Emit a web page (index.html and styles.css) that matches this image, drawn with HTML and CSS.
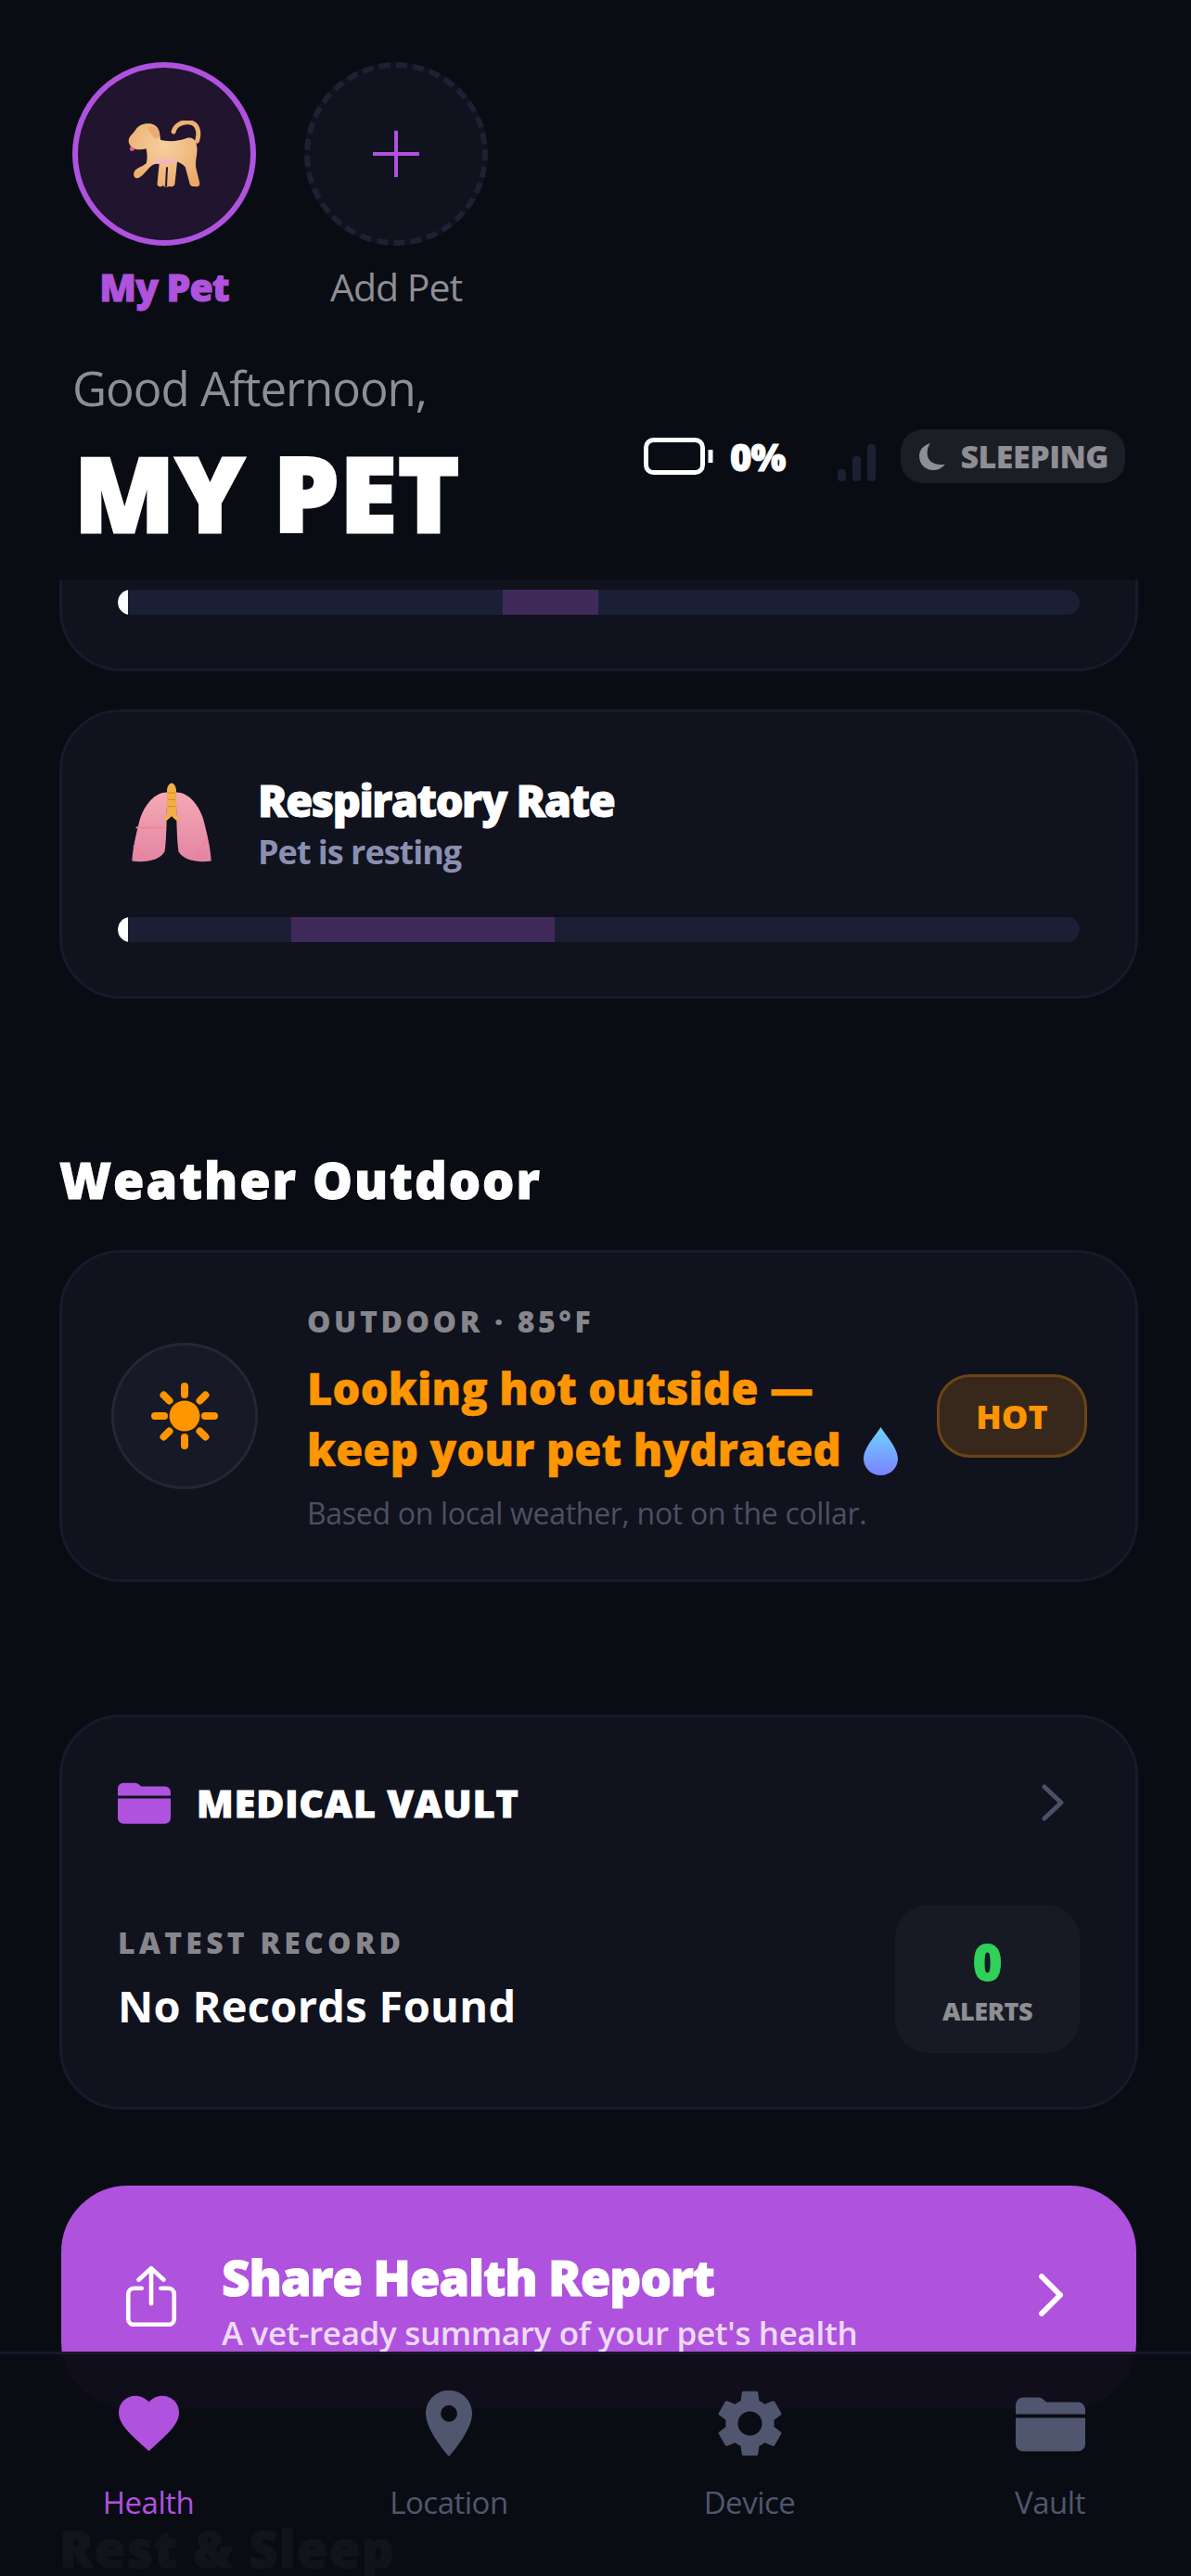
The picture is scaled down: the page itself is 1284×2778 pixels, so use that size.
FILE: index.html
```html
<!DOCTYPE html>
<html lang="en">
<head>
  <meta charset="UTF-8">
  <meta name="viewport" content="width=device-width, initial-scale=1.0">
  <title>My Pet - Health</title>
  <link rel="stylesheet" href="styles.css">
</head>
<body>
  <div class="screen">
    <header class="top">
      <div class="pets">
        <div class="pet active">
          <div class="pet-circle">
            <svg class="dog" viewBox="0 0 235 215">
              <defs>
                <radialGradient id="dogFill" cx="50%" cy="35%" r="75%">
                  <stop offset="0" stop-color="#f6cfa0"/>
                  <stop offset="1" stop-color="#eba763"/>
                </radialGradient>
              </defs>
              <path d="M146 36C152 12 178 2 200 6c22 4 32 28 22 60" fill="none" stroke="#eeb06e" stroke-width="15" stroke-linecap="round"/>
              <path fill="url(#dogFill)" d="M2 60C6 48 16 42 24 30 34 12 62 4 84 14c16 8 18 26 20 48 26 8 61 4 86-6 22-6 32 14 32 36 0 23-6 36-4 58l12 50c2 12-8 15-16 12-14 2-16-7-18-17l-12-45c-8-10-19-15-26-18l-8 73c-2 9-14 9-18 7-8 3-16 2-20-4l-2 4c-10 2-18 0-16-12l6-60c-12-2-20 0-30 10-10 10-20 25-34 34-14 6-22-6-16-20 6-12 24-14 38-26 6-18 2-38 0-48-14 4-32 6-44-2C6 82 0 72 2 60z"/>
              <path fill="none" stroke="#20142e" stroke-width="6" d="M125 150l-3 62"/>
              <path fill="#f5b3c4" d="M84 124h68v13H84z"/>
              <path fill="#e8569a" d="M7 84c8 2 13 4 13 8 0 7-11 9-15 2z"/>
              <path fill="#e9ac72" d="M62 22c14-8 34-2 38 14 2 12-2 22-10 24-8-4-20-20-28-38z"/>
            </svg>
          </div>
          <span class="pet-name">My Pet</span>
        </div>
        <div class="pet">
          <div class="pet-circle">
            <svg class="plus" viewBox="0 0 50 50"><path d="M25 1v48M1 25h48"/></svg>
          </div>
          <span class="pet-name">Add Pet</span>
        </div>
      </div>
      <div class="hello-row">
        <div class="hello">
          <p class="greeting">Good Afternoon,</p>
          <h1 class="pet-title">MY PET</h1>
        </div>
        <div class="status">
          <svg class="battery" viewBox="0 0 76 40">
            <rect x="2.500" y="2.500" width="61" height="35" rx="8"/>
            <path d="M72 13v14"/>
          </svg>
          <span class="batt-pct">0%</span>
          <div class="signal"><i class="s1"></i><i class="s2"></i><i class="s3"></i></div>
          <div class="state-pill">
            <svg class="moon" viewBox="0 0 26 28"><path d="M11 1C4 3 0 8 0 14c0 8 6 14 14 14 5 0 9-2 12-6-9 2-18-2-18-11 0-4 1-7 3-10z"/></svg>
            <span>SLEEPING</span>
          </div>
        </div>
      </div>
    </header>

    <main class="feed">
      <section class="card card-cut">
        <div class="gauge"><i class="gauge-thumb"></i><i class="gauge-range range-heart"></i></div>
      </section>

      <section class="card vital">
        <div class="vital-head">
          <svg class="lungs" viewBox="0 0 260 260">
            <defs>
              <linearGradient id="lungFill" x1="0" y1="0" x2="0" y2="1">
                <stop offset="0" stop-color="#f4a9b2"/>
                <stop offset="1" stop-color="#e384a4"/>
              </linearGradient>
            </defs>
            <path fill="url(#lungFill)" d="M115 30C80 28 42 66 26 120 14 165 3 215 1 254c40 6 88 0 106-30 6-30 8-130 8-194z"/>
            <path fill="url(#lungFill)" d="M145 30c35-2 73 36 89 90 12 45 23 95 25 134-40 6-88 0-106-30-6-30-8-130-8-194z"/>
            <path fill="none" stroke="#ee8494" stroke-width="6" d="M14 145h94M6 205l48 44M246 175l-38 72"/>
            <path fill="#f2b048" d="M130 0c8 0 15 12 15 24v66c0 14 5 24 12 32h-12l-15-14-15 14h-12c7-8 12-18 12-32V24c0-12 7-24 15-24z"/>
            <path fill="none" stroke="#d98a34" stroke-width="4" d="M118 32h24M118 54h24M118 76h24"/>
          </svg>
          <div>
            <h3 class="vital-name">Respiratory Rate</h3>
            <p class="vital-note">Pet is resting</p>
          </div>
        </div>
        <div class="gauge"><i class="gauge-thumb"></i><i class="gauge-range range-resp"></i></div>
      </section>

      <h2 class="section-title">Weather Outdoor</h2>

      <section class="card weather">
        <div class="sun-badge">
          <svg class="sun" viewBox="0 0 74 74">
            <circle cx="37" cy="37" r="16.500"/>
            <path d="M37 5v9M37 60v9M5 37h10M59 37h10M14.500 14.500l6 6M53.500 53.500l6 6M59.500 14.500l-6 6M20.500 53.500l-6 6"/>
          </svg>
        </div>
        <div class="weather-text">
          <p class="weather-label">OUTDOOR · 85°F</p>
          <p class="weather-msg">Looking hot outside —<br>keep your pet hydrated <svg class="drop" viewBox="0 0 37 52">
            <defs>
              <linearGradient id="dropFill" x1="0" y1="0" x2="0" y2="1">
                <stop offset="0" stop-color="#6fd4ff"/>
                <stop offset="1" stop-color="#7b82ff"/>
              </linearGradient>
            </defs>
            <path fill="url(#dropFill)" d="M18.500 0C23 8 37 22 37 34c0 10-8 18-18.500 18S0 44 0 34C0 22 14 8 18.500 0z"/>
          </svg></p>
          <p class="weather-note">Based on local weather, not on the collar.</p>
        </div>
        <div class="hot-tag">HOT</div>
      </section>

      <section class="card vault">
        <div class="vault-head">
          <svg class="folder folder-sm" viewBox="0 0 75 60"><path d="M0 10a8 8 0 0 1 8-8h16c4 0 6 2 9 5h34a8 8 0 0 1 8 8v5H0zM0 24h75v28a8 8 0 0 1-8 8H8a8 8 0 0 1-8-8z"/></svg>
          <h3 class="vault-title">MEDICAL VAULT</h3>
          <svg class="chev vault-chev" viewBox="0 0 24 40"><path d="M3 3l18 17L3 37"/></svg>
        </div>
        <div class="vault-body">
          <div>
            <p class="vault-label">LATEST RECORD</p>
            <p class="vault-record">No Records Found</p>
          </div>
          <div class="alerts">
            <span class="alerts-num">0</span>
            <span class="alerts-label">ALERTS</span>
          </div>
        </div>
      </section>

      <section class="card share">
        <svg class="share-icon" viewBox="0 0 52 64">
          <path d="M26 40V3M13 15L26 3l13 12M16 24H8a6 6 0 0 0-6 6v26a6 6 0 0 0 6 6h36a6 6 0 0 0 6-6V30a6 6 0 0 0-6-6h-8"/>
        </svg>
        <div class="share-text">
          <h3 class="share-title">Share Health Report</h3>
          <p class="share-note">A vet-ready summary of your pet's health</p>
        </div>
        <svg class="chev share-chev" viewBox="0 0 26 46"><path d="M3 3l20 20L3 43"/></svg>
      </section>

      <h2 class="section-title rest-title">Rest &amp; Sleep</h2>
    </main>

    <nav class="tabbar">
      <div class="tab active">
        <svg class="tab-icon icon-heart" viewBox="2 3 20 18.350"><path d="M12 21.350l-1.450-1.320C5.400 15.360 2 12.280 2 8.500 2 5.420 4.420 3 7.500 3c1.740 0 3.410.81 4.500 2.090C13.090 3.810 14.760 3 16.500 3 19.580 3 22 5.420 22 8.500c0 3.780-3.400 6.860-8.550 11.540L12 21.350z"/></svg>
        <span>Health</span>
      </div>
      <div class="tab">
        <svg class="tab-icon icon-pin" viewBox="5 2 14 20"><path fill-rule="evenodd" d="M12 2C8.130 2 5 5.130 5 9c0 5.250 7 13 7 13s7-7.750 7-13c0-3.870-3.130-7-7-7zm0 9.500a2.500 2.500 0 0 1 0-5 2.500 2.500 0 0 1 0 5z"/></svg>
        <span>Location</span>
      </div>
      <div class="tab">
        <svg class="tab-icon icon-gear" viewBox="2.500 2 19 20"><path d="M19.140 12.940c.04-.3.06-.61.06-.94 0-.32-.02-.64-.07-.94l2.030-1.580c.18-.14.23-.41.12-.61l-1.920-3.320c-.12-.22-.37-.29-.59-.22l-2.390.96c-.5-.38-1.030-.7-1.620-.94l-.36-2.540c-.04-.24-.24-.41-.48-.41h-3.840c-.24 0-.43.17-.47.41l-.36 2.540c-.59.24-1.130.57-1.620.94l-2.390-.96c-.22-.08-.47 0-.59.22L2.740 8.870c-.12.21-.08.47.12.61l2.030 1.580c-.05.3-.09.63-.09.94s.02.64.07.94l-2.030 1.580c-.18.14-.23.41-.12.61l1.920 3.320c.12.22.37.29.59.22l2.390-.96c.5.38 1.030.7 1.620.94l.36 2.540c.05.24.24.41.48.41h3.840c.24 0 .44-.17.47-.41l.36-2.540c.59-.24 1.130-.56 1.620-.94l2.390.96c.22.08.47 0 .59-.22l1.920-3.320c.12-.22.07-.47-.12-.61l-2.010-1.580zM12 15.600c-1.980 0-3.600-1.620-3.600-3.600s1.620-3.600 3.600-3.600 3.600 1.620 3.600 3.600-1.620 3.600-3.600 3.600z"/></svg>
        <span>Device</span>
      </div>
      <div class="tab">
        <svg class="tab-icon icon-folder" viewBox="0 0 75 60"><path d="M0 10a8 8 0 0 1 8-8h16c4 0 6 2 9 5h34a8 8 0 0 1 8 8v5H0zM0 24h75v28a8 8 0 0 1-8 8H8a8 8 0 0 1-8-8z"/></svg>
        <span>Vault</span>
      </div>
    </nav>
  </div>
</body>
</html>
```

FILE: styles.css
```css
*, *::before, *::after { box-sizing:border-box; margin:0; padding:0; }
html, body { width:100%; height:100%; overflow:hidden; background:#0a0c14; font-family:'Open Sans','Noto Sans',sans-serif; color:#fff; }
svg { display:block; }
.screen { position:relative; width:1284px; height:2778px; overflow:hidden; display:flex; flex-direction:column; background:#0a0c14; }

/* header */
.top { height:625px; flex:none; padding:67px 71px 0 78px; background:#0a0c14; }
.pets { display:flex; gap:52px; }
.pet { width:198px; display:flex; flex-direction:column; align-items:center; }
.pet-circle {
  width:198px; height:198px; border-radius:50%;
  display:flex; align-items:center; justify-content:center;
  background:#10121e; border:6px dashed #1c2133;
}
.pet.active .pet-circle { background:#20142e; border:6px solid #af52de; }
.dog { width:79px; height:72px; }
.plus { width:50px; height:50px; }
.plus path { stroke:#af52de; stroke-width:4; stroke-linecap:round; fill:none; }
.pet-name { margin-top:18px; font-size:41px; line-height:52px; color:#8e8e93; letter-spacing:-1px; white-space:nowrap; }
.pet.active .pet-name { color:#af52de; font-weight:800; -webkit-text-stroke:1px #af52de; }

.hello-row { display:flex; justify-content:space-between; align-items:flex-start; margin-top:51px; }
.greeting { font-size:51px; line-height:64px; color:#8e8e93; letter-spacing:-1px; }
.pet-title { font-size:112px; line-height:120px; font-weight:800; margin-top:21px; margin-left:2px; letter-spacing:1px; -webkit-text-stroke:3px #fff; }
.status { display:flex; align-items:center; margin-top:77px; height:58px; }
.battery { width:76px; height:40px; }
.battery rect, .battery path { fill:none; stroke:#fff; stroke-width:5; }
.batt-pct { margin-left:17px; font-size:40px; font-weight:800; letter-spacing:-1px; -webkit-text-stroke:1px #fff; }
.signal { display:flex; align-items:flex-end; gap:7px; margin-left:57px; height:40px; margin-top:14px; }
.signal i { display:block; width:9px; border-radius:4px; background:#1c2033; }
.signal .s1 { height:13px; }
.signal .s2 { height:27px; }
.signal .s3 { height:40px; }
.state-pill { display:flex; align-items:center; gap:16px; height:58px; margin-left:27px; padding:0 18px 0 20px; border-radius:24px; background:#1c1e26; color:#8e8e93; font-size:34px; font-weight:800; letter-spacing:-.5px; }
.moon { width:28px; height:30px; fill:#8e8e93; }

.feed { flex:1; min-height:0; overflow:hidden; padding:0 57px 0 64px; }
.card { background:#10121e; border:3px solid #171a2a; border-radius:66px; }
.card-cut { height:99px; padding:11px 60px 0; border-top:0; border-radius:0 0 66px 66px; }
.gauge { position:relative; height:27px; border-radius:14px; background:#1b1f35; overflow:hidden; }
.gauge-thumb { position:absolute; left:0; top:0; width:11px; height:100%; background:#fff; border-radius:50% 0 0 50%; }
.gauge-range { position:absolute; top:0; height:100%; background:#3f2a5a; }
.range-heart { left:415px; width:103px; }
.range-resp { left:187px; width:284px; }

.vital { margin-top:41px; height:312px; padding:64px 60px 0; }
.vital-head { display:flex; align-items:center; gap:50px; margin-bottom:47px; padding-left:15px; }
.lungs { width:86px; height:87px; }
.vital-name { font-size:47px; line-height:62px; font-weight:800; letter-spacing:-1.500px; -webkit-text-stroke:1px #fff; }
.vital-note { margin-top:2px; font-size:36px; line-height:46px; font-weight:700; color:#8a8fb0; letter-spacing:-1px; }

.section-title { margin-top:158px; font-size:54px; line-height:74px; font-weight:800; letter-spacing:2px; -webkit-text-stroke:1px #fff; white-space:nowrap; }

.weather { margin-top:39px; height:358px; display:flex; align-items:center; padding:0 52px 0 53px; }
.sun-badge { width:158px; height:158px; flex:none; border-radius:50%; background:#171a26; border:3px solid #252733; display:flex; align-items:center; justify-content:center; }
.sun { width:74px; height:74px; }
.sun circle { fill:#ff9500; }
.sun path { stroke:#ff9500; stroke-width:8; stroke-linecap:round; fill:none; }
.weather-text { flex:1; min-width:0; margin:3px 0 0 53px; }
.weather-label { font-size:32px; line-height:44px; font-weight:800; letter-spacing:3.600px; color:#86868c; white-space:nowrap; }
.weather-msg { margin-top:17px; font-size:47px; line-height:66px; font-weight:800; color:#ff9500; letter-spacing:.2px; -webkit-text-stroke:.5px #ff9500; white-space:nowrap; }
.drop { display:inline-block; width:37px; height:52px; margin-left:12px; vertical-align:-10px; }
.weather-note { margin-top:14px; font-size:32px; line-height:44px; color:#4d5060; letter-spacing:-.3px; white-space:nowrap; }
.hot-tag { width:162px; height:90px; flex:none; border-radius:36px; background:#38281c; border:3px solid #6b4516; color:#ff9500; font-size:36px; font-weight:800; display:flex; align-items:center; justify-content:center; }

.vault { margin-top:143px; height:426px; padding:64px 60px 0; }
.vault-head { display:flex; align-items:center; }
.folder { fill:#af52de; }
.folder-sm { width:57px; height:46px; }
.vault-title { margin-left:28px; font-size:41px; line-height:56px; font-weight:800; letter-spacing:1px; -webkit-text-stroke:1px #fff; }
.chev { fill:none; stroke-linecap:round; stroke-linejoin:round; }
.vault-chev { width:24px; height:40px; margin-left:auto; margin-right:17px; stroke:#4a5068; stroke-width:5; }
.vault-body { display:flex; justify-content:space-between; align-items:center; margin-top:82px; }
.vault-label { font-size:32px; line-height:44px; font-weight:800; letter-spacing:4.200px; color:#86868c; white-space:nowrap; }
.vault-record { margin-top:14px; font-size:47px; line-height:64px; font-weight:700; letter-spacing:.3px; white-space:nowrap; }
.alerts { width:199px; height:160px; border-radius:36px; background:#171a25; display:flex; flex-direction:column; align-items:center; justify-content:center; }
.alerts-num { margin-top:4px; font-size:54px; line-height:62px; font-weight:800; color:#30d158; -webkit-text-stroke:1px #30d158; }
.alerts-label { margin-top:4px; font-size:27px; line-height:38px; font-weight:800; color:#8e8e93; letter-spacing:-.5px; }

.share { margin:82px 2px 0; height:240px; padding:0 76px 0 66px; display:flex; align-items:center; background:#af52de; border-color:#af52de; border-radius:72px; }
.share-icon { width:56px; height:66px; flex:none; margin-top:-2px; }
.share-icon path { fill:none; stroke:#fff; stroke-width:4.500; stroke-linecap:round; stroke-linejoin:round; }
.share-text { margin-left:48px; margin-top:6px; flex:1; min-width:0; }
.share-title { font-size:53px; line-height:72px; font-weight:800; letter-spacing:-1.200px; -webkit-text-stroke:1px #fff; white-space:nowrap; }
.share-note { font-size:35px; line-height:48px; font-weight:600; color:rgba(255,255,255,.8); letter-spacing:-.35px; white-space:nowrap; }
.share-chev { width:26px; height:46px; stroke:#fff; stroke-width:6; margin-top:-4px; }
.rest-title { margin-top:114px; letter-spacing:1.500px; }

/* tab bar floats over the feed */
.tabbar {
  position:absolute; left:-2px; bottom:0; width:1296px; height:242px;
  display:grid; grid-template-columns:repeat(4,324px);
  background:rgba(10,12,20,.97); border-top:3px solid #171a2a;
  padding-top:38px;
}
.tab { display:flex; flex-direction:column; align-items:center; color:#4f566e; }
.tab.active { color:#af52de; }
.tab-icon { height:73px; fill:currentColor; }
.icon-heart { width:65px; }
.icon-pin { width:50px; }
.icon-gear { width:69px; }
.icon-folder { width:75px; }
.tab span { margin-top:26px; font-size:33px; line-height:46px; letter-spacing:-.5px; }
```
